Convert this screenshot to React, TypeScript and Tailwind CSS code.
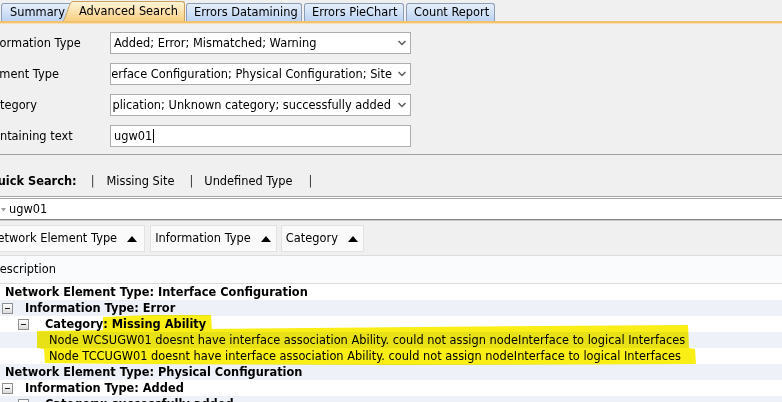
import React from "react";

function Chevron() {
  return (
    <svg width="8" height="6" viewBox="0 0 8 6" className="shrink-0 mr-[4px]">
      <polyline points="0.5,1 4,4.5 7.5,1" fill="none" stroke="#5a5a5a" strokeWidth="1.5" />
    </svg>
  );
}

function UpTri() {
  return (
    <svg width="10" height="6" viewBox="0 0 10 6" className="shrink-0">
      <polygon points="0,6 5,0 10,6" fill="#000" />
    </svg>
  );
}

function MinusBox() {
  return (
    <div className="w-[11px] h-[11px] shrink-0 border border-[#8f8f8f] bg-linear-to-b from-[#ffffff] to-[#dcdcdc] flex items-center justify-center">
      <div className="w-[5px] h-[1px] bg-[#222]" />
    </div>
  );
}

type TreeRow = {
  blue: boolean;
  box?: number;
  text: number;
  bold: boolean;
  label: string;
};

const rows: TreeRow[] = [
  { blue: false, text: 5, bold: true, label: "Network Element Type: Interface Configuration" },
  { blue: true, box: 2, text: 25, bold: true, label: "Information Type: Error" },
  { blue: false, box: 18, text: 45, bold: true, label: "Category: Missing Ability" },
  { blue: true, text: 49, bold: false, label: "Node WCSUGW01 doesnt have interface association Ability. could not assign nodeInterface to logical Interfaces" },
  { blue: false, text: 49, bold: false, label: "Node TCCUGW01 doesnt have interface association Ability. could not assign nodeInterface to logical Interfaces" },
  { blue: true, text: 5, bold: true, label: "Network Element Type: Physical Configuration" },
  { blue: false, box: 2, text: 25, bold: true, label: "Information Type: Added" },
  { blue: true, box: 18, text: 45, bold: true, label: "Category: successfully added" },
];

export default function App() {
  return (
    <div className="relative w-[782px] h-[402px] overflow-hidden bg-[#f0f0f0] text-black text-[11.4px] leading-[13px] font-['DejaVu_Sans',sans-serif]">
      {/* Tabs */}
      <div className="flex items-end h-[21px]">
        <div className="w-[72px] ml-[1px] h-[18px] rounded-t-[3px] border border-b-0 border-[#8d9db5] bg-linear-to-b from-[#e6effb] to-[#bcd3f2] pl-[8px] flex items-center whitespace-nowrap overflow-hidden">
          Summary
        </div>
        <div className="relative z-10 -ml-[1px] w-[113px] h-[20px] rounded-tr-[3px] border-t border-r border-[#c9a25e] bg-linear-to-b from-[#fff4d8] to-[#f7cf80] pl-[7px] flex items-center whitespace-nowrap">
          <svg width="10" height="20" viewBox="0 0 10 20" className="absolute -left-[9px] -top-[1px]" preserveAspectRatio="none">
            <defs>
              <linearGradient id="actg" x1="0" y1="0" x2="0" y2="1">
                <stop offset="0" stopColor="#fff4d8" />
                <stop offset="1" stopColor="#f7cf80" />
              </linearGradient>
            </defs>
            <path d="M0,20 C3,17 5,6 8,1.5 Q9,0.5 10,0.5 L10,20 Z" fill="url(#actg)" />
            <path d="M0,20 C3,17 5,6 8,1.5 Q9,0.5 10,0.5" fill="none" stroke="#c9a25e" strokeWidth="1" />
          </svg>
          Advanced Search
        </div>
        <div className="ml-[1px] w-[116px] h-[18px] rounded-t-[3px] border border-b-0 border-[#8d9db5] bg-linear-to-b from-[#e6effb] to-[#bcd3f2] pl-[7px] flex items-center whitespace-nowrap">
          Errors Datamining
        </div>
        <div className="ml-[2px] w-[100px] h-[18px] rounded-t-[3px] border border-b-0 border-[#8d9db5] bg-linear-to-b from-[#e6effb] to-[#bcd3f2] pl-[7px] flex items-center whitespace-nowrap">
          Errors PieChart
        </div>
        <div className="ml-[2px] w-[89px] h-[18px] rounded-t-[3px] border border-b-0 border-[#8d9db5] bg-linear-to-b from-[#e6effb] to-[#bcd3f2] pl-[7px] flex items-center whitespace-nowrap">
          Count Report
        </div>
      </div>
      <div className="h-[2px] bg-[#f1c36f]" />
      <div className="h-[1px] bg-[#f8e0b2]" />

      {/* Form */}
      <div className="pt-[8px] pb-[7px] border-b border-[#a0a0a0] flex flex-col gap-[9px]">
        <div className="flex items-center h-[22px]">
          <div className="-ml-[15px] w-[125px] shrink-0 whitespace-nowrap">Information Type</div>
          <div className="w-[301px] h-[22px] border border-[#abadb3] bg-white flex items-center">
            <div className="flex-1 min-w-0 overflow-hidden pl-[3px] whitespace-nowrap">Added; Error; Mismatched; Warning</div>
            <Chevron />
          </div>
        </div>
        <div className="flex items-center h-[22px]">
          <div className="-ml-[15px] w-[125px] shrink-0 whitespace-nowrap overflow-hidden">
            <span className="-ml-[3px]">Element Type</span>
          </div>
          <div className="w-[301px] h-[22px] border border-[#abadb3] bg-white flex items-center">
            <div className="flex-1 min-w-0 overflow-hidden flex justify-end ml-[1px] mr-[6px]">
              <span className="shrink-0 whitespace-nowrap">Interface Configuration; Physical Configuration; Site</span>
            </div>
            <Chevron />
          </div>
        </div>
        <div className="flex items-center h-[22px]">
          <div className="-ml-[15px] w-[125px] shrink-0 whitespace-nowrap">Category</div>
          <div className="w-[301px] h-[22px] border border-[#abadb3] bg-white flex items-center">
            <div className="flex-1 min-w-0 overflow-hidden flex justify-end ml-[1px] mr-[7px]">
              <span className="shrink-0 whitespace-nowrap">Duplication; Unknown category; successfully added</span>
            </div>
            <Chevron />
          </div>
        </div>
        <div className="flex items-center h-[22px]">
          <div className="-ml-[15px] w-[125px] shrink-0 whitespace-nowrap">Containing text</div>
          <div className="w-[301px] h-[22px] border border-[#abadb3] bg-white flex items-center pl-[3px]">
            <span>ugw01</span>
            <span className="w-[1px] h-[14px] bg-black ml-[1px]" />
          </div>
        </div>
      </div>

      {/* Quick search */}
      <div className="h-[41px] flex items-center pt-[11px] whitespace-nowrap">
        <span className="-ml-[12px] font-bold">Quick Search:</span>
        <span className="ml-[14px] text-[#333]">|</span>
        <span className="ml-[12px]">Missing Site</span>
        <span className="ml-[15px] text-[#333]">|</span>
        <span className="ml-[11px]">Undefined Type</span>
        <span className="ml-[16px] text-[#333]">|</span>
      </div>

      {/* Filter row */}
      <div className="h-[3px] border-y border-[#a3a3a3] bg-white" />
      <div className="h-[20px] bg-white flex items-center">
        <svg width="5" height="4" viewBox="0 0 5 4" className="ml-[1px] mt-[1px]">
          <polygon points="0,0 5,0 2.5,3.5" fill="#9a9a9a" />
        </svg>
        <span className="ml-[3px]">ugw01</span>
      </div>
      <div className="h-[1px] bg-[#858585]" />
      <div className="h-[1px] bg-[#c9c9c9]" />

      {/* Group panel */}
      <div className="h-[35px] flex items-center pt-[1px] -ml-[16px] gap-[5px] border-b border-[#dcdcdc]">
        <div className="h-[27px] flex items-center gap-[10px] pl-[4px] pr-[7px] bg-[#fafafa] border border-[#e2e2e2] whitespace-nowrap">
          <span>Network Element Type</span>
          <UpTri />
        </div>
        <div className="h-[27px] flex items-center gap-[10px] pl-[4px] pr-[5px] bg-[#fafafa] border border-[#e2e2e2] whitespace-nowrap">
          <span>Information Type</span>
          <UpTri />
        </div>
        <div className="-ml-[1px] h-[27px] flex items-center gap-[10px] pl-[4px] pr-[5px] bg-[#fafafa] border border-[#e2e2e2] whitespace-nowrap">
          <span>Category</span>
          <UpTri />
        </div>
      </div>

      {/* Description header */}
      <div className="h-[28px] bg-[#fafbfc] border-b border-[#dcdcdc] flex items-center">
        <span className="-ml-[9px]">Description</span>
      </div>

      {/* Tree */}
      <div className="bg-white">
        {rows.map((r, i) => (
          <div
            key={i}
            className={`h-[16px] flex items-center whitespace-nowrap ${r.blue ? "bg-[#eef2f8]" : "bg-white"}`}
            style={{ paddingLeft: r.box !== undefined ? r.box : r.text }}
          >
            {r.box !== undefined && <MinusBox />}
            <span
              className={r.bold ? "font-bold" : ""}
              style={r.box !== undefined ? { marginLeft: r.text - r.box - 11 } : undefined}
            >
              {r.label}
            </span>
          </div>
        ))}
      </div>

      {/* Highlighter marks */}
      <svg
        className="absolute left-0 top-0 pointer-events-none mix-blend-multiply"
        width="782"
        height="402"
        viewBox="0 0 782 402"
      >
        <polygon points="103,317 150,315 211,315 212,331 150,332 103,332" fill="#f9ee16" />
        <polygon
          points="37,331 200,329 420,327 688,325 689,348 695,349 696,364 400,365 120,364 45,363 44,349 37,348"
          fill="#f9ee16"
        />
      </svg>
    </div>
  );
}
